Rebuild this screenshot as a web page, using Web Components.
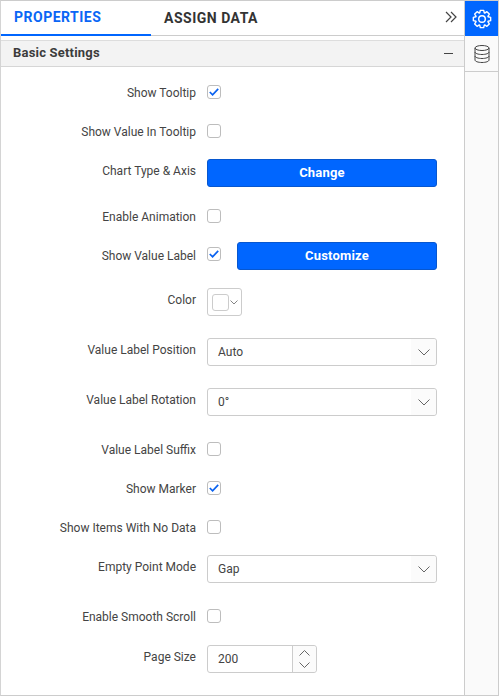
<!DOCTYPE html>
<html>
<head>
<meta charset="utf-8">
<style>
    html, body{ margin: 0; padding: 0; background: #fff; }
    body{ font-family: Roboto, "Liberation Sans", sans-serif; }
</style>
</head>
<body>
<props-panel>
    <panel-tabs slot="tabs"></panel-tabs>
    <section-head slot="head">Basic Settings</section-head>

    <prop-row label="Show Tooltip" style="--top:18px"><check-box checked></check-box></prop-row>
    <prop-row label="Show Value In Tooltip" style="--top:25px"><check-box></check-box></prop-row>
    <prop-row label="Chart Type &amp; Axis" tall style="--top:21px"><blue-button>Change</blue-button></prop-row>
    <prop-row label="Enable Animation" style="--top:22px"><check-box></check-box></prop-row>
    <prop-row label="Show Value Label" tall flat style="--top:19px"><check-box checked class="up"></check-box><blue-button style="margin-left:16px">Customize</blue-button></prop-row>
    <prop-row label="Color" tall style="--top:18px"><color-pick></color-pick></prop-row>
    <prop-row label="Value Label Position" tall style="--top:22px"><drop-list>Auto</drop-list></prop-row>
    <prop-row label="Value Label Rotation" tall style="--top:22px"><drop-list>0°</drop-list></prop-row>
    <prop-row label="Value Label Suffix" style="--top:26px"><check-box></check-box></prop-row>
    <prop-row label="Show Marker" style="--top:25px"><check-box checked></check-box></prop-row>
    <prop-row label="Show Items With No Data" style="--top:25px"><check-box></check-box></prop-row>
    <prop-row label="Empty Point Mode" tall style="--top:21px"><drop-list>Gap</drop-list></prop-row>
    <prop-row label="Enable Smooth Scroll" style="--top:26px"><check-box></check-box></prop-row>
    <prop-row label="Page Size" tall style="--top:22px"><num-box>200</num-box></prop-row>

    <side-rail slot="rail"></side-rail>
</props-panel>

<script>
function shadow(el, html){
    el.attachShadow({mode:"open"}).innerHTML = html;
}

// outline of a cog with square teeth, centred on 10,10
function gearPath(teeth, outer, inner){
    var pts = [];
    var step = Math.PI * 2 / teeth;
    for (var i = 0; i < teeth; i++){
        var a = i * step - Math.PI / 2;
        var list = [[inner, -.56], [outer, -.3], [outer, .3], [inner, .56]];
        list.forEach(function(p){
            var ang = a + p[1] * step * .82;
            pts.push((10 + p[0] * Math.cos(ang)).toFixed(2) + " " + (10 + p[0] * Math.sin(ang)).toFixed(2));
        });
    }
    return "M" + pts.join("L") + "Z";
}

class PropsPanel extends HTMLElement {
    constructor(){
        super();
        shadow(this, `
<style>
    :host{
        display: flex;
        width: 499px;
        height: 696px;
        box-sizing: border-box;
        border: 1px solid #ccc;
        border-left-color: #d4d4d4;
        overflow: hidden;
    }
    #main{ flex: 1; min-width: 0; }
    #rows{ display: flex; flex-direction: column; }
    #rail{ width: 33px; border-left: 1px solid #ccc; background: #fafafa; }
</style>
<div id="main">
    <slot name="tabs"></slot>
    <slot name="head"></slot>
    <div id="rows"><slot></slot></div>
</div>
<div id="rail"><slot name="rail"></slot></div>`);
    }
}

class PanelTabs extends HTMLElement {
    constructor(){
        super();
        shadow(this, `
<style>
    :host{
        display: flex;
        height: 35px;
        box-sizing: border-box;
        border-bottom: 1px solid #ccc;
        font: 700 14px Roboto, "Liberation Sans", sans-serif;
        letter-spacing: .5px;
        color: #333;
    }
    div{ display: flex; align-items: center; height: 34px; box-sizing: border-box; }
    #one{ width: 150px; padding-left: 13px; color: #0a66f5; border-bottom: 2px solid #0066ff; height: 35px; padding-bottom: 1px; }
    #two{ padding-left: 13px; flex: 1; }
    svg{ margin-right: 7px; margin-top: -2px; }
</style>
<div id="one">PROPERTIES</div>
<div id="two">ASSIGN DATA</div>
<svg width="12" height="12" viewBox="0 0 12 12" fill="none" stroke="#444" stroke-width="1.2" style="align-self:center">
    <path d="M1 1l5 5-5 5M6 1l5 5-5 5"/>
</svg>`);
    }
}

class SectionHead extends HTMLElement {
    constructor(){
        super();
        shadow(this, `
<style>
    :host{
        display: flex;
        align-items: center;
        justify-content: space-between;
        height: 27px;
        margin-top: 4px;
        padding: 0 11px 2px 12px;
        box-sizing: border-box;
        background: #f3f3f3;
        border-top: 1px solid #ddd;
        border-bottom: 1px solid #d6d6d6;
        font: 700 13px Roboto, "Liberation Sans", sans-serif;
        letter-spacing: .2px;
        color: #3c3c3c;
    }
    i{ display: block; width: 9px; height: 1px; background: #444; margin-top: 2px; }
</style>
<slot></slot><i></i>`);
    }
}

class PropRow extends HTMLElement {
    constructor(){
        super();
        shadow(this, `
<style>
    :host{
        display: flex;
        align-items: center;
        height: 14px;
        margin-top: var(--top, 25px);
        font: 400 12px Roboto, "Liberation Sans", sans-serif;
        color: #444;
    }
    :host([tall]){ height: 28px; }
    #label{ width: 195px; margin-right: 11px; padding-top: 2px; box-sizing: border-box; text-align: right; white-space: nowrap; }
    :host([tall]) #label{ padding-top: 0; padding-bottom: 4px; }
    :host([flat]) #label{ padding-bottom: 0; }
    #ctl{ display: flex; align-items: center; }
</style>
<div id="label"></div>
<div id="ctl"><slot></slot></div>`);
        this.shadowRoot.getElementById("label").textContent = this.getAttribute("label");
    }
}

class CheckBox extends HTMLElement {
    constructor(){
        super();
        var tick = this.hasAttribute("checked")
            ? '<svg width="10" height="8" viewBox="0 0 10 8" fill="none" stroke="#0a62f0" stroke-width="1.7"><path d="M.8 4l2.8 2.8L9.2.9"/></svg>'
            : '';
        shadow(this, `
<style>
    :host{
        display: flex;
        align-items: center;
        justify-content: center;
        width: 14px;
        height: 14px;
        box-sizing: border-box;
        border: 1px solid #bdbdbd;
        border-radius: 3px;
        background: #fff;
    }
    :host(.up){ margin-bottom: 4px; }
</style>
${tick}`);
    }
}

class BlueButton extends HTMLElement {
    constructor(){
        super();
        shadow(this, `
<style>
    :host{
        display: flex;
        align-items: center;
        justify-content: center;
        flex: none;
        width: 200px;
        height: 28px;
        padding-bottom: 1px;
        box-sizing: border-box;
        background: #0066ff;
        border: 1px solid #0757cf;
        border-radius: 3px;
        color: #fff;
        font: 700 13px Roboto, "Liberation Sans", sans-serif;
        letter-spacing: .2px;
    }
    :host(:first-child){ width: 230px; }
</style>
<slot></slot>`);
    }
}

class ColorPick extends HTMLElement {
    constructor(){
        super();
        shadow(this, `
<style>
    :host{
        display: flex;
        align-items: center;
        width: 35px;
        height: 28px;
        box-sizing: border-box;
        border: 1px solid #ccc;
        border-radius: 3px;
        padding-left: 4px;
    }
    i{ display: block; width: 17px; height: 17px; box-sizing: border-box; border: 1px solid #ccc; border-radius: 3px; background: #fff; }
    svg{ margin-left: 1px; }
</style>
<i></i>
<svg width="8" height="5" viewBox="0 0 8 5" fill="none" stroke="#777" stroke-width=".9"><path d="M.5.5L4 4 7.500.5"/></svg>`);
    }
}

class DropList extends HTMLElement {
    constructor(){
        super();
        shadow(this, `
<style>
    :host{
        display: flex;
        width: 230px;
        height: 28px;
        box-sizing: border-box;
        border: 1px solid #ccc;
        border-radius: 3px;
        color: #444;
    }
    #val{ flex: 1; display: flex; align-items: center; padding-left: 10px; }
    #arrow{ width: 25px; display: flex; align-items: center; justify-content: center; background: #fbfbfb; border-radius: 0 3px 3px 0; }
</style>
<div id="val"><slot></slot></div>
<div id="arrow"><svg width="12" height="7" viewBox="0 0 12 7" fill="none" stroke="#555" stroke-width=".9"><path d="M.5.5L6 6 11.500.5"/></svg></div>`);
    }
}

class NumBox extends HTMLElement {
    constructor(){
        super();
        shadow(this, `
<style>
    :host{
        display: flex;
        width: 110px;
        height: 28px;
        box-sizing: border-box;
        border: 1px solid #ccc;
        border-radius: 3px;
        color: #444;
    }
    #val{ flex: 1; display: flex; align-items: center; padding-left: 10px; }
    #spin{
        width: 23px;
        display: flex;
        flex-direction: column;
        align-items: center;
        justify-content: center;
        gap: 6px;
        background: #fbfbfb;
        border-left: 1px solid #ccc;
        border-radius: 0 3px 3px 0;
    }
    svg{ display: block; }
</style>
<div id="val"><slot></slot></div>
<div id="spin">
    <svg width="11" height="6" viewBox="0 0 11 6" fill="none" stroke="#555" stroke-width=".9"><path d="M.5 5.500L5.500.5l5 5"/></svg>
    <svg width="11" height="6" viewBox="0 0 11 6" fill="none" stroke="#555" stroke-width=".9"><path d="M.5.5l5 5 5-5"/></svg>
</div>`);
    }
}

class SideRail extends HTMLElement {
    constructor(){
        super();
        shadow(this, `
<style>
    :host{ display: block; }
    div{ display: flex; align-items: center; justify-content: center; height: 35px; box-sizing: border-box; }
    #gear{ background: #0066ff; }
    #db{ border-bottom: 1px solid #ccc; height: 36px; }
</style>
<div id="gear">
    <svg width="20" height="20" viewBox="0 0 20 20" fill="none" stroke="#fff" stroke-width="1.4" stroke-linejoin="round">
        <path d="${gearPath(8, 8.8, 6.5)}"/>
        <circle cx="10" cy="10" r="3.300"/>
    </svg>
</div>
<div id="db">
    <svg width="16" height="18" viewBox="0 0 16 18" fill="none" stroke="#444" stroke-width="1">
        <ellipse cx="8" cy="3" rx="7" ry="2.500"/>
        <path d="M1 3v12c0 1.400 3.100 2.500 7 2.500s7-1.100 7-2.500V3M1 7c0 1.400 3.100 2.500 7 2.500S15 8.400 15 7M1 11c0 1.400 3.100 2.500 7 2.500s7-1.100 7-2.500"/>
    </svg>
</div>`);
    }
}

customElements.define("props-panel", PropsPanel);
customElements.define("panel-tabs", PanelTabs);
customElements.define("section-head", SectionHead);
customElements.define("prop-row", PropRow);
customElements.define("check-box", CheckBox);
customElements.define("blue-button", BlueButton);
customElements.define("color-pick", ColorPick);
customElements.define("drop-list", DropList);
customElements.define("num-box", NumBox);
customElements.define("side-rail", SideRail);
</script>
</body>
</html>
